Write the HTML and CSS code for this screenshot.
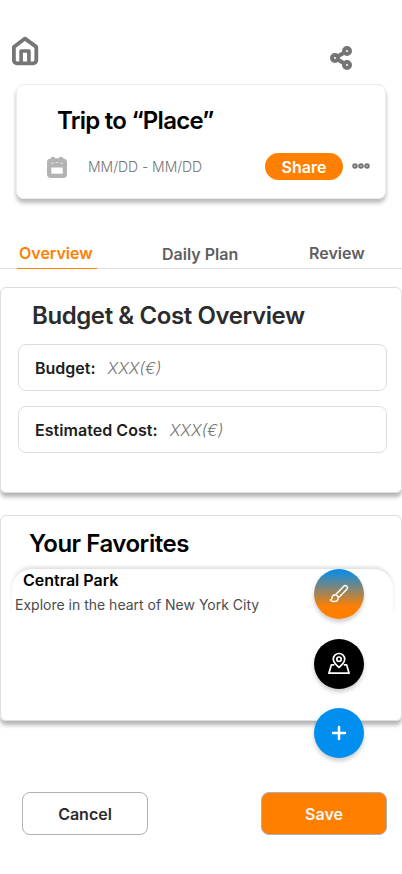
FILE: index.html
```html
<!DOCTYPE html>
<html lang="en">
<head>
<meta charset="utf-8">
<meta name="viewport" content="width=device-width, initial-scale=1">
<title>Trip overview</title>
<link rel="stylesheet" href="styles.css">
</head>
<body>
<main class="screen">
  <header class="topbar">
    <svg class="home-icon" viewBox="0 0 28 30" width="28" height="30" fill="none" stroke="#757575" stroke-width="3.8" stroke-linejoin="round"><path d="M2.900 10.900 14 2.600l11.300 8.300v13.400a3 3 0 0 1-3 3H5.900a3 3 0 0 1-3-3z"/><path stroke-width="3.600" d="M10.100 27V15h7.800V27"/></svg>
    <svg class="share-icon" viewBox="0 0 22 24" width="22" height="24" fill="none" stroke="#757575" stroke-width="4"><path d="m5 12 12-7M5 12l12 7"/><circle cx="5" cy="12" r="3" fill="#fff"/><circle cx="17" cy="5" r="3" fill="#fff"/><circle cx="17" cy="19" r="3" fill="#fff"/></svg>
  </header>

  <section class="trip">
    <h1 class="trip-title">Trip to “Place”</h1>
    <div class="trip-row">
      <svg class="calendar" viewBox="0 0 20 21" width="20" height="21"><path fill="#b3b3b3" d="M4 1.500a2 2 0 0 1 4-.3h4a2 2 0 0 1 4 .3 4 4 0 0 1 4 4V17a4 4 0 0 1-4 4H4a4 4 0 0 1-4-4V5.500a4 4 0 0 1 4-4z"/><path fill="#fff" d="M4.300 10.500h11.400v6.200H4.300z"/><path fill="none" stroke="#d8d8d8" stroke-width="1" d="M4.500 5.500v1h2v-1m2 0h3m2 0v1h2v-1"/></svg>
      <span class="dates">MM/DD - MM/DD</span>
      <button class="share">Share</button>
      <svg class="more" viewBox="0 0 18 6" width="18" height="6" fill="#b0b0b0" stroke="#757575" stroke-width="1.700"><circle cx="3" cy="3" r="1.900"/><circle cx="9" cy="3" r="1.900"/><circle cx="15" cy="3" r="1.900"/></svg>
    </div>
  </section>

  <nav class="tabs">
    <a class="tab active">Overview</a>
    <a class="tab daily">Daily Plan</a>
    <a class="tab review">Review</a>
  </nav>

  <section class="panel budget">
    <h2 class="budget-title">Budget &amp; Cost Overview</h2>
    <div class="field"><span class="label">Budget:</span><em class="amount">XXX(€)</em></div>
    <div class="field"><span class="label cost">Estimated Cost:</span><em class="amount">XXX(€)</em></div>
  </section>

  <section class="panel favorites">
    <h2 class="favorites-title">Your Favorites</h2>
    <article class="place">
      <h3 class="place-name">Central Park</h3>
      <p class="place-text">Explore in the heart of New York City</p>
    </article>
    <div class="fabs">
      <button class="fab brush" aria-label="Customize"><svg viewBox="0 0 20 20" width="20" height="20" fill="none" stroke="#fff" stroke-width="1.500" stroke-linecap="round" stroke-linejoin="round"><path d="M7.500 9.700 14.800 2.300a2 2 0 0 1 3 2.900l-7.300 7.500"/><path d="M6.900 10.900a3.300 3.300 0 0 1 2.300 2.100c.5 2.600-1.200 4.500-3.800 4.500-1.700 0-3-.5-4-1.600 1.400 0 1.400-.8 1.600-2.100.3-2 1.900-3.300 3.900-2.900z"/></svg></button>
      <button class="fab map" aria-label="Map"><svg viewBox="0 0 24 24" width="24" height="24" fill="none" stroke="#fff" stroke-width="1.700" stroke-linejoin="round"><path d="M12 15.500c-2.400-2.300-5.700-4.900-5.700-8.300a5.700 5.700 0 0 1 11.400 0c0 3.400-3.300 6-5.700 8.300z"/><circle cx="12" cy="7.200" r="2.200"/><path d="M7.300 12.800H4.400L1.900 21.200h20.200l-2.500-8.400h-2.900"/></svg></button>
      <button class="fab add" aria-label="Add"><svg viewBox="0 0 16 16" width="16" height="16" stroke="#fff" stroke-width="2.500" stroke-linecap="round"><path d="M8 2v12M2 8h12"/></svg></button>
    </div>
  </section>

  <footer class="actions">
    <button class="action cancel">Cancel</button>
    <button class="action save">Save</button>
  </footer>
</main>
</body>
</html>
```
FILE: styles.css
```css
* { box-sizing: border-box; }
body { margin: 0; background: #fff; font-family: Inter, sans-serif; color: #000; }
h1, h2, h3, p { margin: 0; font-weight: 600; }
button { border: 0; padding: 0; font: inherit; }
svg { display: block; flex: none; }
.screen { width: 402px; height: 874px; overflow: hidden; }
.topbar { display: flex; justify-content: space-between; height: 84px; padding: 36px 50px 0 11px; }
.share-icon { margin-top: 10px; }

.trip { height: 115px; margin: 0 16px; padding: 20px 15px 0 31px; border: 1px solid #ebebeb; border-radius: 8px; box-shadow: 0 4px 4px rgba(0,0,0,.27); }
.trip-title { padding-left: 9px; font-size: 24px; line-height: 32px; letter-spacing: -.75px; }
.trip-row { display: flex; align-items: center; height: 27px; margin-top: 16px; }
.calendar { margin-left: -1px; margin-top: 1px; }
.dates { width: 177px; margin-left: 21px; font-size: 14px; font-weight: 350; line-height: 20px; letter-spacing: -.04px; color: #757575; }
.share { width: 78px; height: 27px; border-radius: 14px; background: #ff8000; color: #fff; font-size: 16px; font-weight: 600; line-height: 28px; }
.more { margin-left: 9px; margin-top: -2px; }

.tabs { display: flex; height: 31px; margin-top: 39px; border-bottom: 1px solid #e0e0e0; font-size: 16px; font-weight: 600; line-height: 30px; color: #5f5f5f; }
.tab.active { width: 80px; height: 31px; margin-left: 17px; padding-left: 2px; border-bottom: 1px solid #ff8000; color: #ff8000; }
.daily { margin-left: 65px; width: 147px; padding-top: 1px; }

.panel { border: 1px solid #dedede; border-radius: 6px; box-shadow: 0 4px 4px rgba(0,0,0,.3); }
.budget { height: 206px; margin-top: 18px; padding: 12px 14px 0 17px; }
.budget-title { padding-left: 14px; font-size: 24px; line-height: 32px; letter-spacing: -.41px; color: #2c2c2c; }
.field { display: flex; align-items: center; height: 47px; margin-top: 15px; padding-left: 16px; border: 1px solid #dedede; border-radius: 8px; font-size: 16px; }
.budget-title + .field { margin-top: 12px; }
.label { font-weight: 600; color: #1e1e1e; }
.cost { letter-spacing: .05px; }
.amount { margin-left: 12px; font-weight: 300; color: #757575; }

.favorites { position: relative; height: 206px; margin-top: 22px; padding: 12px 7px 0 10px; }
.favorites-title { padding-left: 18px; font-size: 24px; line-height: 32px; letter-spacing: -.48px; }
.place { height: 46px; margin: 9px 1px 0; padding-left: 3px; border-radius: 20px 20px 0 0; box-shadow: 0 -3px 4px -1px rgba(0,0,0,.14); }
.place-name { padding-left: 8px; font-size: 16px; line-height: 22px; }
.place-text { margin-top: 4px; font-size: 14px; font-weight: 400; line-height: 20px; color: #4b4b4b; }
.fabs { position: absolute; left: 313px; top: 53px; display: flex; flex-direction: column; }
.fab { display: grid; place-items: center; width: 50px; height: 50px; border-radius: 50%; box-shadow: 0 3px 4px rgba(0,0,0,.2); }
.brush { background: linear-gradient(#008cf0, #ff8000 76%); }
.map { margin-top: 20px; background: #000; }
.add { margin-top: 19px; background: #008eef; }

.actions { display: flex; justify-content: space-between; margin-top: 71px; padding: 0 15px 0 22px; }
.action { width: 126px; height: 43px; border: 1px solid #b0b0b0; border-radius: 8px; font-size: 16px; font-weight: 600; }
.cancel { background: #fff; color: #2c2c2c; }
.save { background: #ff8000; color: #f5f5f5; }
```
